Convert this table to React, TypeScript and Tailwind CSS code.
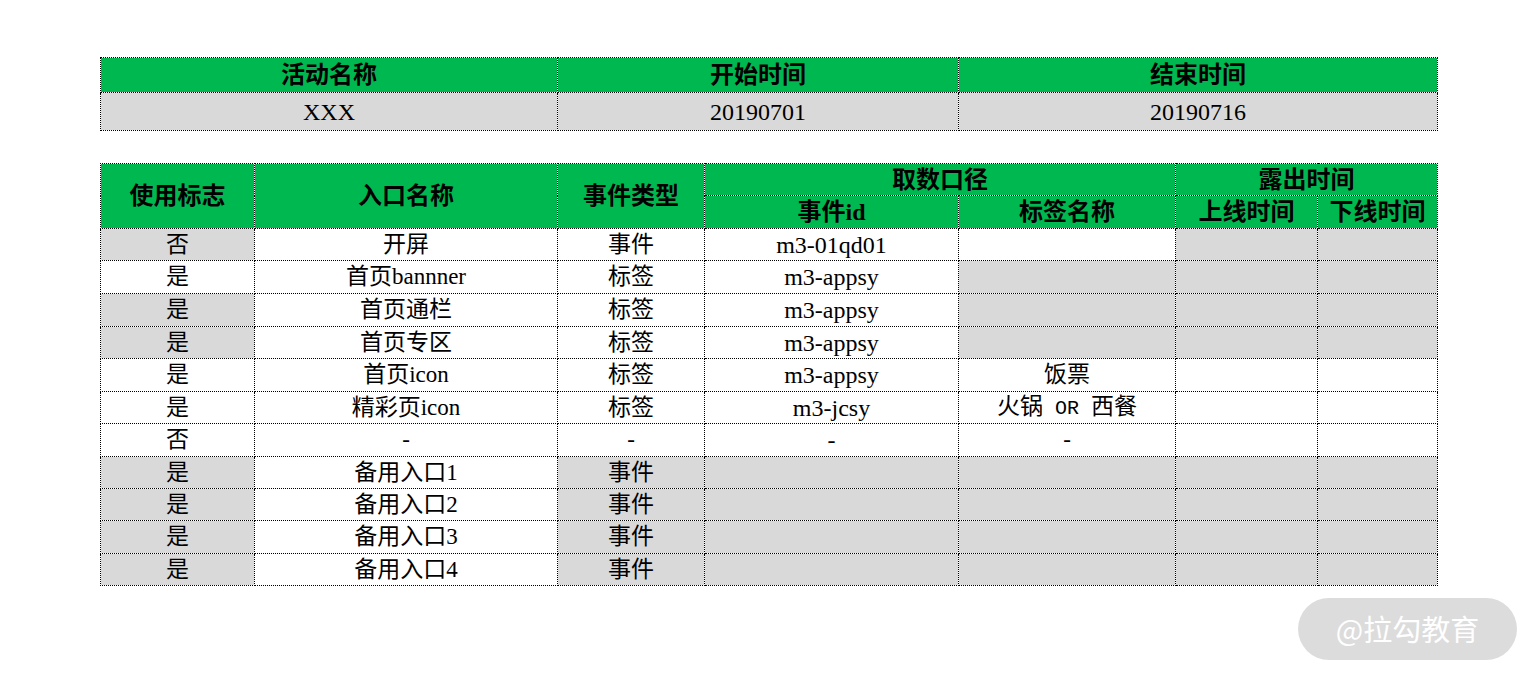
import React from "react";

const G = "bg-[#d9d9d9]";
const W = "bg-white";
const HB = "bg-[#00b850]";

const FONT = { fontFamily: '"Liberation Serif", "Noto Sans CJK SC", serif' };

type Row = {
  a: string;
  b: string;
  c: string;
  d: string;
  e: React.ReactNode;
  bg: string[];
  h: string;
};

const GRAY_TAIL = [G, W, G, G, G, G, G];

const rows: Row[] = [
  { a: "否", b: "开屏", c: "事件", d: "m3-01qd01", e: "", bg: [G, W, W, W, W, G, G], h: "h-[32px]" },
  { a: "是", b: "首页bannner", c: "标签", d: "m3-appsy", e: "", bg: [W, W, W, W, G, G, G], h: "h-[33px]" },
  { a: "是", b: "首页通栏", c: "标签", d: "m3-appsy", e: "", bg: [G, W, W, W, G, G, G], h: "h-[33px]" },
  { a: "是", b: "首页专区", c: "标签", d: "m3-appsy", e: "", bg: [G, W, W, W, G, G, G], h: "h-[32px]" },
  { a: "是", b: "首页icon", c: "标签", d: "m3-appsy", e: "饭票", bg: [W, W, W, W, W, W, W], h: "h-[33px]" },
  {
    a: "是",
    b: "精彩页icon",
    c: "标签",
    d: "m3-jcsy",
    e: (
      <span>
        火锅<span className="text-[20px]" style={{ fontFamily: '"Liberation Mono", monospace' }}> OR </span>西餐
      </span>
    ),
    bg: [W, W, W, W, W, W, W],
    h: "h-[32px]",
  },
  { a: "否", b: "-", c: "-", d: "-", e: "-", bg: [W, W, W, W, W, W, W], h: "h-[33px]" },
  { a: "是", b: "备用入口1", c: "事件", d: "", e: "", bg: GRAY_TAIL, h: "h-[32px]" },
  { a: "是", b: "备用入口2", c: "事件", d: "", e: "", bg: GRAY_TAIL, h: "h-[32px]" },
  { a: "是", b: "备用入口3", c: "事件", d: "", e: "", bg: GRAY_TAIL, h: "h-[33px]" },
  { a: "是", b: "备用入口4", c: "事件", d: "", e: "", bg: GRAY_TAIL, h: "h-[32px]" },
];

const cell = "border border-dotted border-black p-0 text-center align-middle whitespace-nowrap overflow-hidden";
const head = `${cell} ${HB} font-bold text-[24px] leading-[26px] text-black`;
const data = `${cell} text-[23px] leading-[28px] text-black`;
const latin = `${cell} text-[24px] leading-[28px] text-black`;

export default function App() {
  return (
    <div className="relative w-[1536px] h-[680px] bg-white overflow-hidden" style={FONT}>
      <div className="flex flex-col gap-[32px] pt-[57px] pl-[100px]">
        <table className="table-fixed border-collapse w-[1337px]">
          <colgroup>
            <col className="w-[457px]" />
            <col className="w-[401px]" />
            <col className="w-[479px]" />
          </colgroup>
          <tbody>
            <tr className="h-[35px]">
              <td className={head}>活动名称</td>
              <td className={head}>开始时间</td>
              <td className={head}>结束时间</td>
            </tr>
            <tr className="h-[38px]">
              <td className={`${latin} ${G}`}>XXX</td>
              <td className={`${latin} ${G}`}>20190701</td>
              <td className={`${latin} ${G}`}>20190716</td>
            </tr>
          </tbody>
        </table>

        <table className="table-fixed border-collapse w-[1337px]">
          <colgroup>
            <col className="w-[154px]" />
            <col className="w-[303px]" />
            <col className="w-[147px]" />
            <col className="w-[254px]" />
            <col className="w-[217px]" />
            <col className="w-[142px]" />
            <col className="w-[120px]" />
          </colgroup>
          <tbody>
            <tr className="h-[32px]">
              <td rowSpan={2} className={head}>使用标志</td>
              <td rowSpan={2} className={head}>入口名称</td>
              <td rowSpan={2} className={head}>事件类型</td>
              <td colSpan={2} className={head}>取数口径</td>
              <td colSpan={2} className={head}>露出时间</td>
            </tr>
            <tr className="h-[33px]">
              <td className={head}>事件id</td>
              <td className={head}>标签名称</td>
              <td className={head}>上线时间</td>
              <td className={head}>下线时间</td>
            </tr>
            {rows.map((r, i) => (
              <tr key={i} className={r.h}>
                <td className={`${data} ${r.bg[0]}`}>{r.a}</td>
                <td className={`${data} ${r.bg[1]}`}>{r.b}</td>
                <td className={`${data} ${r.bg[2]}`}>{r.c}</td>
                <td className={`${latin} ${r.bg[3]}`}>{r.d}</td>
                <td className={`${data} ${r.bg[4]}`}>{r.e}</td>
                <td className={`${data} ${r.bg[5]}`}></td>
                <td className={`${data} ${r.bg[6]}`}></td>
              </tr>
            ))}
          </tbody>
        </table>
      </div>

      <div
        className="absolute left-[1298px] top-[598px] w-[219px] h-[62px] rounded-full bg-[#dcdcdc] flex items-center justify-center text-white text-[29px]"
        style={{ fontFamily: '"Noto Sans CJK SC", "Noto Sans", sans-serif' }}
      >
        @拉勾教育
      </div>
    </div>
  );
}
